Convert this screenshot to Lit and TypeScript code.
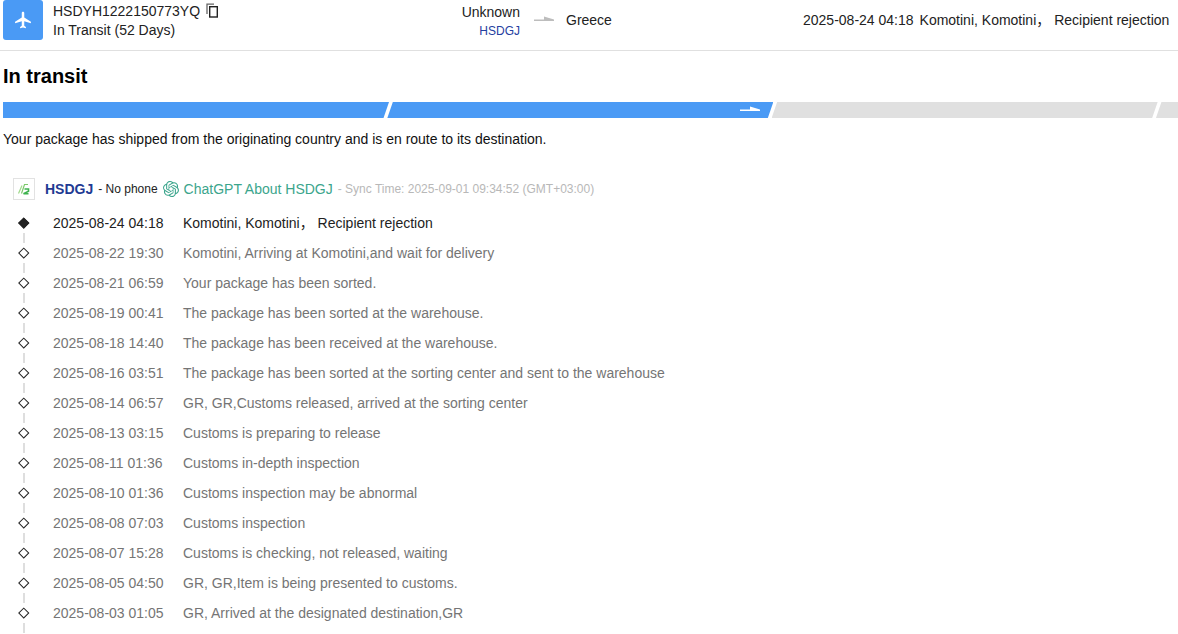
import { LitElement, html, css } from "lit";
import { customElement } from "lit/decorators.js";

const EVENTS: [string, string][] = [
  ["2025-08-24 04:18", "Komotini, Komotini， Recipient rejection"],
  ["2025-08-22 19:30", "Komotini, Arriving at Komotini,and wait for delivery"],
  ["2025-08-21 06:59", "Your package has been sorted."],
  ["2025-08-19 00:41", "The package has been sorted at the warehouse."],
  ["2025-08-18 14:40", "The package has been received at the warehouse."],
  ["2025-08-16 03:51", "The package has been sorted at the sorting center and sent to the warehouse"],
  ["2025-08-14 06:57", "GR, GR,Customs released, arrived at the sorting center"],
  ["2025-08-13 03:15", "Customs is preparing to release"],
  ["2025-08-11 01:36", "Customs in-depth inspection"],
  ["2025-08-10 01:36", "Customs inspection may be abnormal"],
  ["2025-08-08 07:03", "Customs inspection"],
  ["2025-08-07 15:28", "Customs is checking, not released, waiting"],
  ["2025-08-05 04:50", "GR, GR,Item is being presented to customs."],
  ["2025-08-03 01:05", "GR, Arrived at the designated destination,GR"],
];

const arrow = (cls: string) => html`<svg class=${cls} viewBox="0 0 20 6" width="20" height="6">
  <path d="M0 3.5H20V5H0z M10 0.5L20 3.5H10z" fill="currentColor"></path>
</svg>`;

const OPENAI =
  "M22.2819 9.8211a5.9847 5.9847 0 0 0-.5157-4.9108 6.0462 6.0462 0 0 0-6.5098-2.9A6.0651 6.0651 0 0 0 4.9807 4.1818a5.9847 5.9847 0 0 0-3.9977 2.9 6.0462 6.0462 0 0 0 .7427 7.0966 5.98 5.98 0 0 0 .511 4.9107 6.051 6.051 0 0 0 6.5146 2.9001A5.9847 5.9847 0 0 0 13.2599 24a6.0557 6.0557 0 0 0 5.7718-4.2058 5.9894 5.9894 0 0 0 3.9977-2.9001 6.0557 6.0557 0 0 0-.7475-7.0729zm-9.022 12.6081a4.4755 4.4755 0 0 1-2.8764-1.0408l.1419-.0804 4.7783-2.7582a.7948.7948 0 0 0 .3927-.6813v-6.7369l2.02 1.1686a.071.071 0 0 1 .038.052v5.5826a4.504 4.504 0 0 1-4.4945 4.4944zm-9.6607-4.1254a4.4708 4.4708 0 0 1-.5346-3.0137l.142.0852 4.783 2.7582a.7712.7712 0 0 0 .7806 0l5.8428-3.3685v2.3324a.0804.0804 0 0 1-.0332.0615L9.74 19.9502a4.4992 4.4992 0 0 1-6.1408-1.6464zM2.3408 7.8956a4.485 4.485 0 0 1 2.3655-1.9728V11.6a.7664.7664 0 0 0 .3879.6765l5.8144 3.3543-2.0201 1.1685a.0757.0757 0 0 1-.071 0l-4.8303-2.7865A4.504 4.504 0 0 1 2.3408 7.872zm16.5963 3.8558L13.1038 8.364 15.1192 7.2a.0757.0757 0 0 1 .071 0l4.8303 2.7913a4.4944 4.4944 0 0 1-.6765 8.1042v-5.6772a.79.79 0 0 0-.407-.667zm2.0107-3.0231l-.142-.0852-4.7735-2.7818a.7759.7759 0 0 0-.7854 0L9.409 9.2297V6.8974a.0662.0662 0 0 1 .0284-.0615l4.8303-2.7866a4.4992 4.4992 0 0 1 6.6802 4.66zM8.3065 12.863l-2.02-1.1638a.0804.0804 0 0 1-.038-.0567V6.0742a4.4992 4.4992 0 0 1 7.3757-3.4537l-.142.0805L8.704 5.459a.7948.7948 0 0 0-.3927.6813zm1.0976-2.3654l2.602-1.4998 2.6069 1.4998v2.9994l-2.5974 1.4997-2.6067-1.4997Z";

@customElement("app-root")
export class AppRoot extends LitElement {
  static styles = css`
    :host {
      display: block;
      height: 634px;
      overflow: hidden;
      font-family: "Liberation Sans", Arial, "Noto Sans CJK SC", sans-serif;
      font-size: 14px;
      color: #222;
      background: #fff;
    }
    .head {
      display: flex;
      align-items: flex-start;
      height: 50px;
      border-bottom: 1px solid #e0e0e0;
      padding-left: 3px;
      box-sizing: content-box;
    }
    .badge {
      width: 40px;
      height: 40px;
      background: #4a9af5;
      border-radius: 3px;
      display: flex;
      align-items: center;
      justify-content: center;
      flex: none;
    }
    .ident {
      width: 390px;
      margin-left: 10px;
      flex: none;
      line-height: 18px;
      padding-top: 1px;
    }
    .num {
      display: flex;
      align-items: center;
      gap: 6px;
      height: 19px;
    }
    .state {
      margin-top: 1px;
      height: 19px;
      line-height: 19px;
    }
    .origin {
      width: 77px;
      text-align: right;
      flex: none;
      padding-top: 3px;
    }
    .origin .o1 { line-height: 18px; }
    .origin .o2 { color: #24409f; font-size: 12px; line-height: 18px; margin-top: 1px; }
    .harrow { color: #bdbdbd; margin: 16px 0 0 14px; flex: none; display: block; }
    .dest { margin-left: 12px; padding-top: 12px; line-height: 17px; flex: none; width: 237px; }
    .last { display: flex; gap: 6px; padding-top: 12px; line-height: 17px; white-space: pre; flex: none; }

    h2 {
      margin: 14px 0 0 3px;
      font-size: 20px;
      line-height: 23px;
      font-weight: 700;
      color: #000;
    }
    .bar {
      display: flex;
      margin: 14px 0 0 3px;
      height: 16px;
      width: 1175px;
      overflow: hidden;
    }
    .seg {
      flex: none;
      width: 386px;
      height: 16px;
      margin-right: -1.7px;
      background: #e0e0e0;
      clip-path: polygon(5.5px 0, 100% 0, calc(100% - 5.5px) 100%, 0 100%);
      display: flex;
      align-items: flex-end;
      justify-content: flex-end;
    }
    .seg.first { clip-path: polygon(0 0, 100% 0, calc(100% - 5.5px) 100%, 0 100%); }
    .seg.on { background: #4a9af5; }
    .barrow { color: #fff; margin: 0 13px 6px 0; display: block; }
    .desc {
      margin: 13px 0 0 3px;
      line-height: 16px;
      color: #111;
    }
    .carrier {
      display: flex;
      align-items: center;
      margin: 30px 0 0 13px;
      height: 24px;
      white-space: pre;
    }
    .logo {
      width: 20px;
      height: 20px;
      border: 1px solid #e2e2e2;
      display: flex;
      align-items: center;
      justify-content: center;
      flex: none;
    }
    .cname {
      font-weight: 700;
      color: #1f3a93;
      margin-left: 10px;
      font-size: 14px;
    }
    .nophone { font-size: 12px; color: #222; margin-left: 5px; }
    .gpt { display: block; margin-left: 5px; flex: none; }
    .ask { color: #3ba58c; margin-left: 5px; font-size: 14px; }
    .sync { color: #b8b8b8; font-size: 12px; margin-left: 5px; }

    .list { margin-top: 7px; }
    .row {
      display: flex;
      align-items: center;
      height: 30px;
      line-height: 16px;
      color: #757575;
      position: relative;
    }
    .row.cur { color: #222; }
    .rail {
      width: 53px;
      flex: none;
      height: 30px;
      position: relative;
    }
    .rail::before {
      content: "";
      position: absolute;
      left: 23px;
      top: 25px;
      width: 2px;
      height: 10px;
      background: #dedede;
    }
    .row .dia {
      position: absolute;
      left: 20.25px;
      top: 10.75px;
      width: 7.5px;
      height: 7.5px;
      box-sizing: border-box;
      border: 1px solid #222;
      background: #fff;
      transform: rotate(45deg);
    }
    .row.cur .dia { background: #222; }
    .time { width: 130px; flex: none; }
    .msg { white-space: pre; }
  `;

  render() {
    return html`
      <div class="head">
        <div class="badge">
          <svg width="20" height="20" viewBox="0 0 24 24">
            <path fill="#fff" d="M21 16v-2l-8-5V3.500c0-.83-.67-1.500-1.500-1.500S10 2.670 10 3.500V9l-8 5v2l8-2.500V19l-2 1.500V22l3.500-1 3.500 1v-1.500L13 19v-5.500l8 2.500z" transform="translate(.5 0)"></path>
          </svg>
        </div>
        <div class="ident">
          <div class="num">
            <span>HSDYH1222150773YQ</span>
            <svg width="12" height="15" viewBox="0 0 12 15" fill="none">
              <path d="M1 11V1.200H8" stroke-width="1.300" stroke="#666"></path>
              <rect x="3.700" y="3.700" width="7.600" height="10.300" stroke-width="1.400" stroke="#222"></rect>
            </svg>
          </div>
          <div class="state">In Transit (52 Days)</div>
        </div>
        <div class="origin">
          <div class="o1">Unknown</div>
          <div class="o2">HSDGJ</div>
        </div>
        ${arrow("harrow")}
        <div class="dest">Greece</div>
        <div class="last"><span>2025-08-24 04:18</span><span>Komotini, Komotini， Recipient rejection</span></div>
      </div>
      <h2>In transit</h2>
      <div class="bar">
        <div class="seg first on"></div>
        <div class="seg on">${arrow("barrow")}</div>
        <div class="seg"></div>
        <div class="seg"></div>
      </div>
      <div class="desc">Your package has shipped from the originating country and is en route to its destination.</div>
      <div class="carrier">
        <div class="logo">
          <svg width="14" height="14" viewBox="0 0 14 14" fill="none">
            <path d="M1.500 11.500L5 3.500" stroke="#9ed98a" stroke-width="1.200"></path>
            <path d="M4.500 11.500L7.500 2.500H11" stroke="#7cc96a" stroke-width="1.200"></path>
            <path d="M7.500 7H11.500V9.300L6.500 11.700H11.500" stroke="#3fb24f" stroke-width="1.600"></path>
          </svg>
        </div>
        <span class="cname">HSDGJ</span>
        <span class="nophone">- No phone</span>
        <svg class="gpt" width="16" height="16" viewBox="0 0 24 24">
          <path fill="#3ba58c" d=${OPENAI}></path>
        </svg>
        <span class="ask">ChatGPT About HSDGJ</span>
        <span class="sync">- Sync Time: 2025-09-01 09:34:52 (GMT+03:00)</span>
      </div>
      <div class="list">
        ${EVENTS.map(
          ([t, m], i) => html`<div class="row ${i === 0 ? "cur" : ""}">
            <div class="rail"><span class="dia"></span></div>
            <span class="time">${t}</span>
            <span class="msg">${m}</span>
          </div>`
        )}
      </div>
    `;
  }
}
